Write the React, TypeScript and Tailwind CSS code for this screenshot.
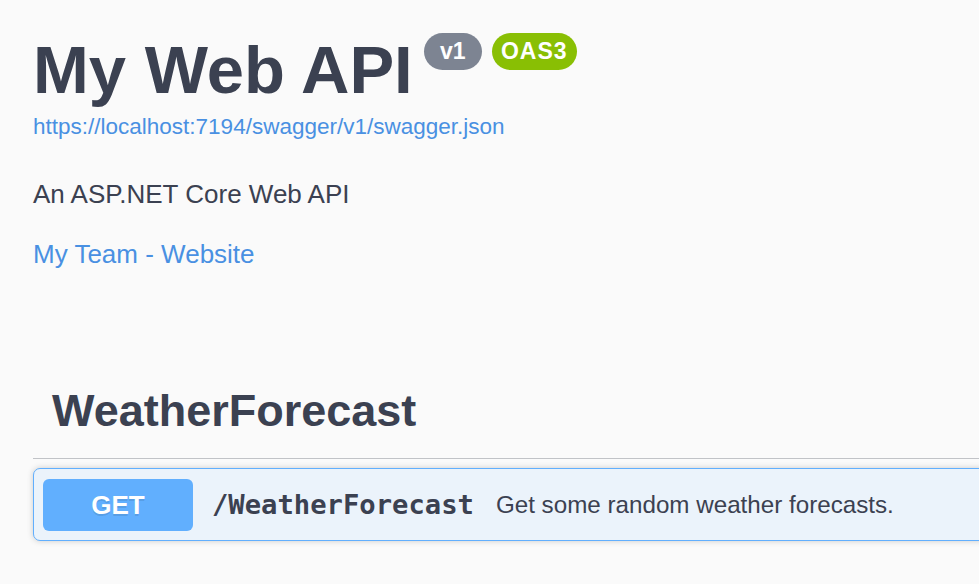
const sans = "font-['Liberation_Sans',Arial,sans-serif]"

function Badge({ label, className }: { label: string; className: string }) {
  return (
    <span
      className={`flex h-[37px] items-center justify-center rounded-full text-[23px] font-bold leading-none text-white ${className}`}
    >
      {label}
    </span>
  )
}

export default function App() {
  return (
    <div className={`h-[584px] w-[979px] overflow-hidden bg-[#fafafa] text-[#3b4151] ${sans}`}>
      <div className="w-[1040px] pl-[33px]">
        {/* info header */}
        <div className="flex items-start pt-[33px]">
          <h1 className="mt-[3px] text-[67px] font-bold leading-[67px]">My Web API</h1>
          <div className="ml-[11px] flex gap-[10px]">
            <Badge label="v1" className="w-[58px] bg-[#7d8492]" />
            <Badge label="OAS3" className="w-[85px] tracking-[1px] bg-[#89bf04]" />
          </div>
        </div>
        <a className="mt-[11px] block text-[22.5px] leading-[26px] text-[#4990e2]">
          https://localhost:7194/swagger/v1/swagger.json
        </a>
        <p className="mt-[39px] text-[26px] leading-[30px]">An ASP.NET Core Web API</p>
        <a className="mt-[30px] block text-[26px] leading-[30px] text-[#4990e2]">My Team - Website</a>

        {/* tag section */}
        <h3 className="mt-[115px] border-b border-[#c1c3c7] pb-[20px] pl-[19px] text-[45px] font-bold leading-[54px]">
          WeatherForecast
        </h3>

        <div className="mt-[9px] flex items-center rounded-[7px] border border-[#61affe] bg-[#ebf3fb] pb-[9px] pl-[9px] pt-[10px] shadow-[0_0_6px_rgba(0,0,0,0.19)]">
          <span className="flex h-[52px] w-[150px] items-center justify-center rounded-[6px] bg-[#61affe] text-[26px] font-bold text-white [text-shadow:0_2px_0_rgba(0,0,0,0.1)]">
            GET
          </span>
          <span className="ml-[19px] font-['DejaVu_Sans_Mono',monospace] text-[27.2px] font-bold">
            /WeatherForecast
          </span>
          <span className="ml-[22px] text-[24.2px]">Get some random weather forecasts.</span>
        </div>
      </div>
    </div>
  )
}
